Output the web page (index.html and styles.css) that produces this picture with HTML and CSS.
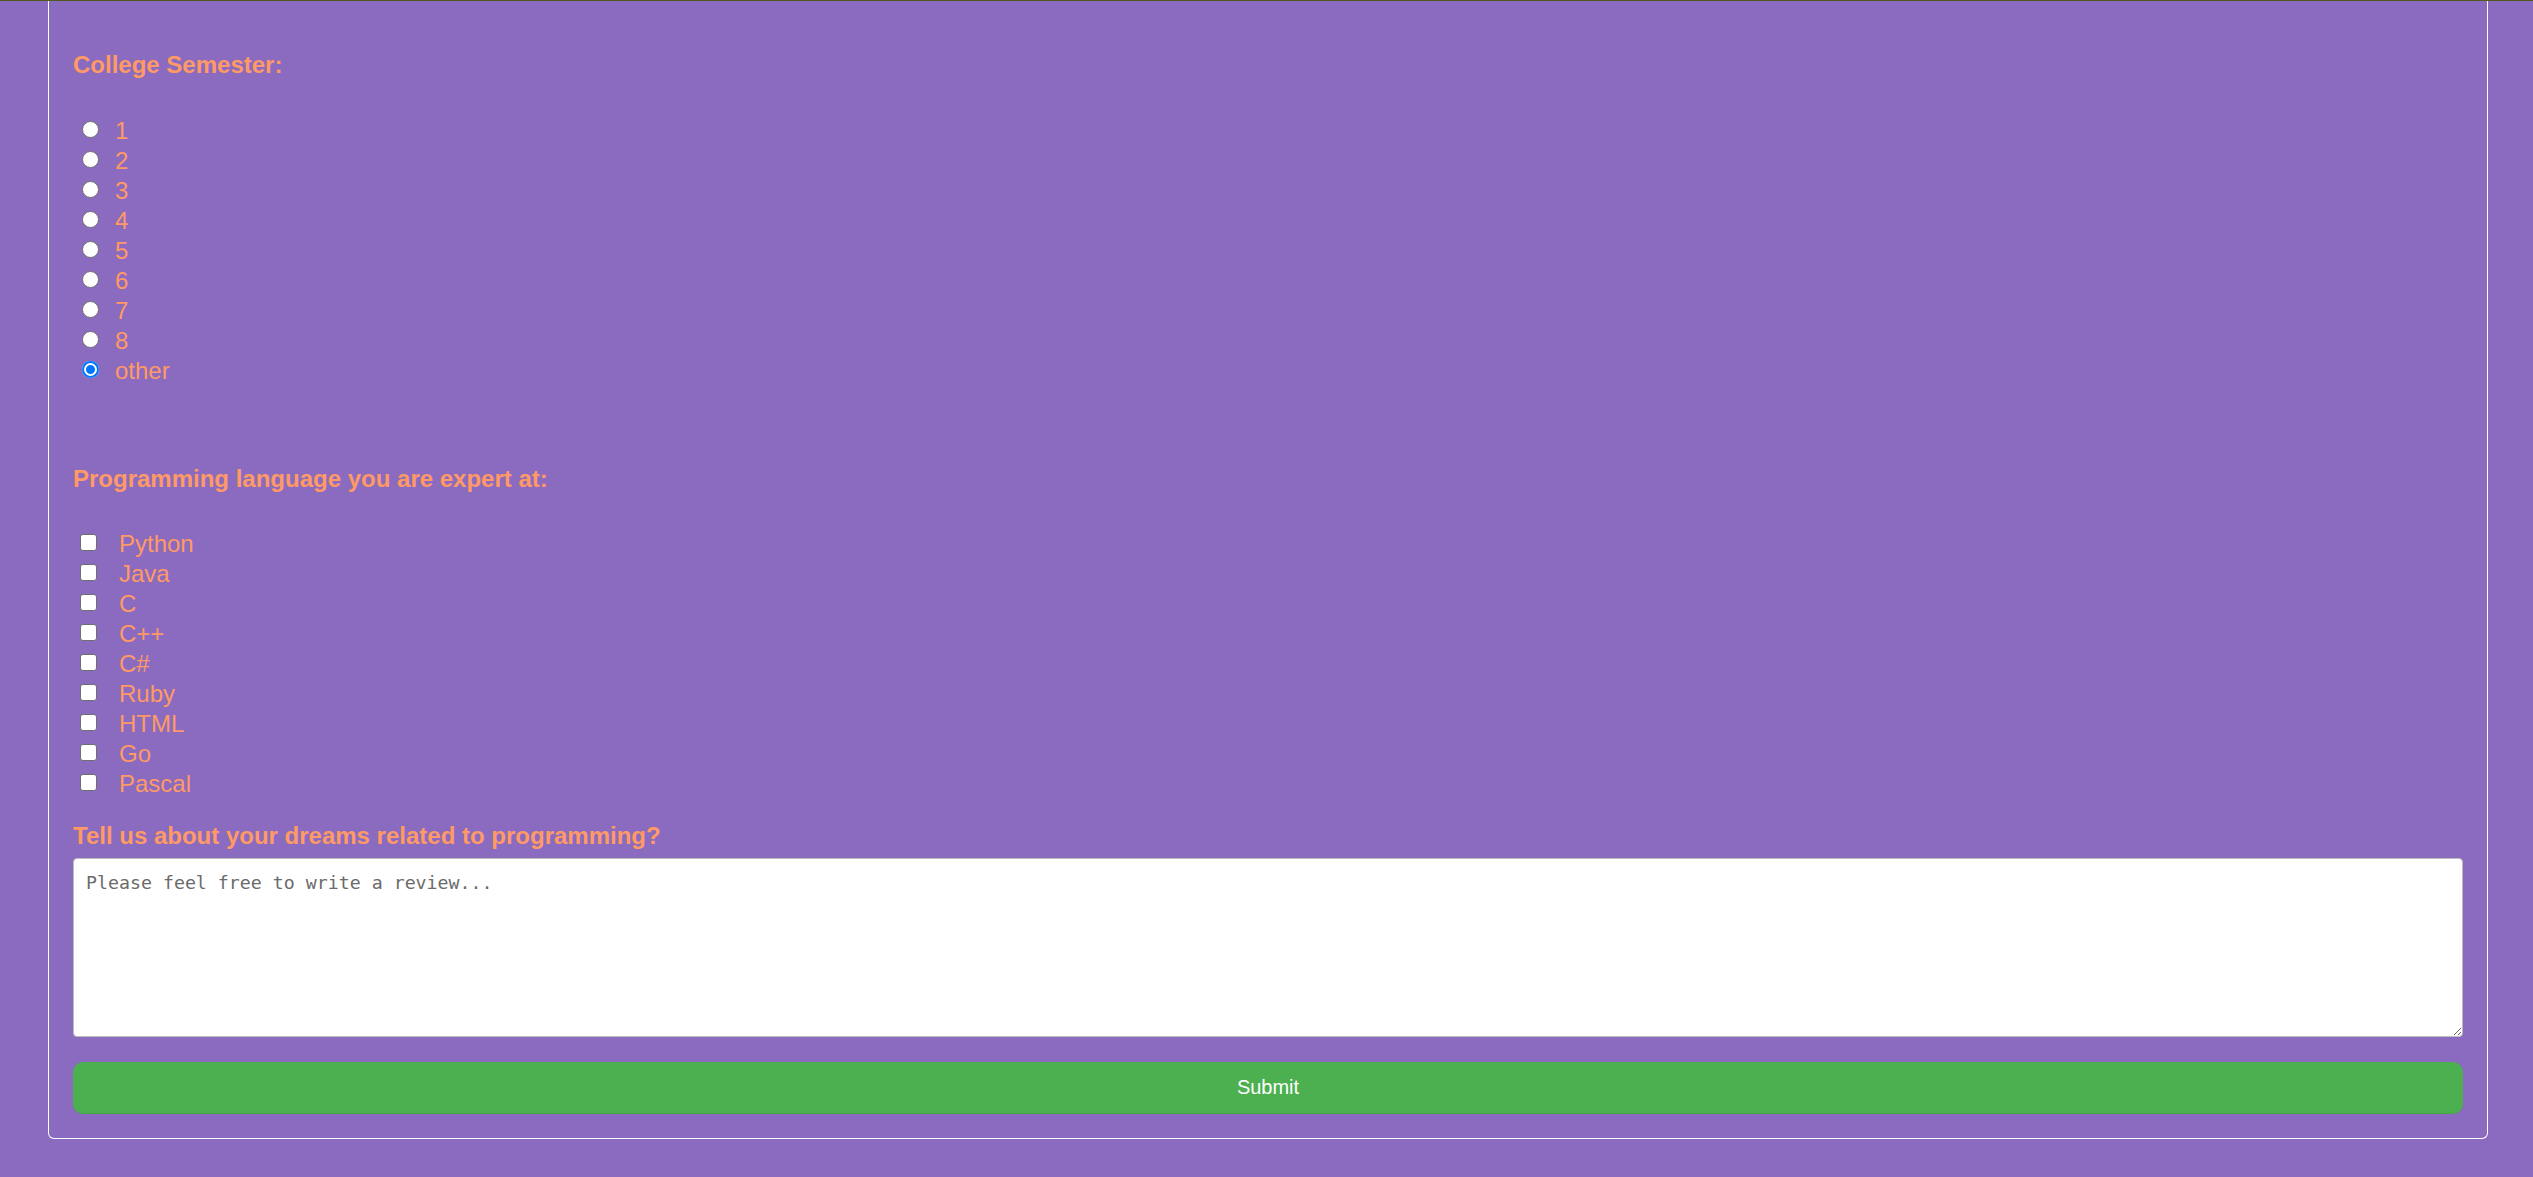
FILE: index.html
```html
<!DOCTYPE html>
<html lang="en">
<head>
<meta charset="utf-8">
<title>Survey</title>
<link rel="stylesheet" href="styles.css">
</head>
<body>
<div class="topline"></div>
<div class="page">
  <form class="survey">
    <h3 class="q q-first">College Semester:</h3>
    <div class="group group-radio">
      <label class="row"><input type="radio" name="sem" class="radio"><span>1</span></label>
      <label class="row"><input type="radio" name="sem" class="radio"><span>2</span></label>
      <label class="row"><input type="radio" name="sem" class="radio"><span>3</span></label>
      <label class="row"><input type="radio" name="sem" class="radio"><span>4</span></label>
      <label class="row"><input type="radio" name="sem" class="radio"><span>5</span></label>
      <label class="row"><input type="radio" name="sem" class="radio"><span>6</span></label>
      <label class="row"><input type="radio" name="sem" class="radio"><span>7</span></label>
      <label class="row"><input type="radio" name="sem" class="radio"><span>8</span></label>
      <label class="row"><input type="radio" name="sem" class="radio" checked><span>other</span></label>
    </div>
    <h3 class="q q-second">Programming language you are expert at:</h3>
    <div class="group group-check">
      <label class="row"><input type="checkbox" class="check"><span>Python</span></label>
      <label class="row"><input type="checkbox" class="check"><span>Java</span></label>
      <label class="row"><input type="checkbox" class="check"><span>C</span></label>
      <label class="row"><input type="checkbox" class="check"><span>C++</span></label>
      <label class="row"><input type="checkbox" class="check"><span>C#</span></label>
      <label class="row"><input type="checkbox" class="check"><span>Ruby</span></label>
      <label class="row"><input type="checkbox" class="check"><span>HTML</span></label>
      <label class="row"><input type="checkbox" class="check"><span>Go</span></label>
      <label class="row"><input type="checkbox" class="check"><span>Pascal</span></label>
    </div>
    <h3 class="q q-third">Tell us about your dreams related to programming?</h3>
    <textarea class="review" placeholder="Please feel free to write a review..."></textarea>
    <button type="button" class="submit">Submit</button>
  </form>
</div>
</body>
</html>
```
FILE: styles.css
```css
* { box-sizing: border-box; }

html, body {
  margin: 0;
  padding: 0;
  background: #8a6bbf;
  font-family: "Liberation Sans", Arial, sans-serif;
}

.topline {
  height: 1px;
  background: #4f5a1e;
}

.page {
  padding: 0 45px 37px 48px;
}

.survey {
  border: 1px solid #ffffff;
  border-top: none;
  border-radius: 0 0 6px 6px;
  padding: 50px 24px 24px 24px;
}

.q {
  margin: 0;
  font-size: 24px;
  line-height: 28px;
  font-weight: bold;
  color: #ff9966;
}

.q-second { margin-top: 79px; }
.q-third { margin-top: 23px; }

.group {
  display: flex;
  flex-direction: column;
}

.group-radio { margin-top: 37px; }
.group-check { margin-top: 36px; }

.row {
  display: flex;
  align-items: center;
  height: 30px;
  font-size: 24px;
  line-height: 30px;
  color: #ff9966;
}

.radio,
.check {
  -webkit-appearance: none;
  appearance: none;
  flex: none;
  width: 17px;
  height: 17px;
  background: #ffffff;
  border: 1px solid #6f6f6f;
}

.radio {
  border-radius: 50%;
  margin: 0 16px 3px 9px;
}

.radio:checked {
  border: none;
  background: #0075ff;
  box-shadow: inset 0 0 0 2px #0075ff, inset 0 0 0 4px #ffffff;
}

.check {
  border-radius: 3px;
  margin: 0 22px 3px 7px;
}

.review {
  display: block;
  width: 100%;
  height: 179px;
  margin: 8px 0 0 0;
  padding: 13px 12px;
  border: 1px solid #bdbdbd;
  border-radius: 4px;
  background: #ffffff;
  font-family: "DejaVu Sans Mono", "Liberation Mono", monospace;
  font-size: 18.25px;
  color: #333;
  resize: vertical;
}

.review::placeholder {
  color: #6b6b6b;
}

.submit {
  display: flex;
  align-items: center;
  justify-content: center;
  width: 100%;
  height: 52px;
  margin-top: 25px;
  border: none;
  border-bottom: 1px solid #43a843;
  border-radius: 10px;
  background: #4caf50;
  color: #ffffff;
  font-family: "Liberation Sans", Arial, sans-serif;
  font-size: 20px;
  cursor: pointer;
}
```
